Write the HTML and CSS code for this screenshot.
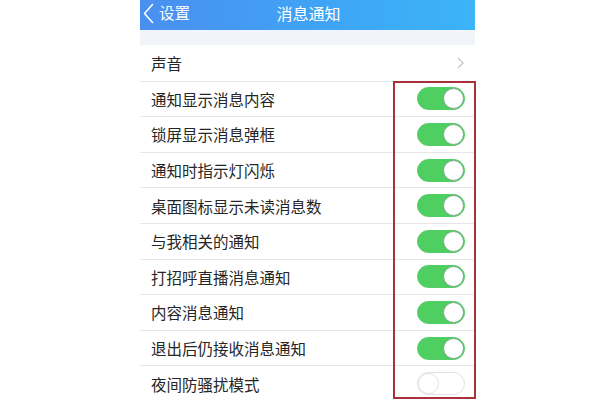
FILE: index.html
```html
<!DOCTYPE html>
<html lang="zh">
<head>
<meta charset="utf-8">
<link rel="stylesheet" href="styles.css">
</head>
<body>
<div class="page">
  <div class="phone">
    <header class="nav">
      <div class="back">
        <svg class="back-icon" width="11" height="21" viewBox="0 0 11 21"><path d="M9.5 1.5 L1.5 10.5 L9.5 19.5" fill="none" stroke="#fff" stroke-width="1.6" stroke-linecap="round" stroke-linejoin="round"/></svg>
        <span>设置</span>
      </div>
      <div class="title">消息通知</div>
    </header>
    <div class="gap"></div>
    <ul class="list">
      <li class="row"><span>声音</span><svg class="chev" width="7" height="12" viewBox="0 0 7 12"><path d="M1 1 L6 6 L1 11" fill="none" stroke="#c4c4c8" stroke-width="1.3"/></svg></li>
      <li class="row"><span>通知显示消息内容</span><i class="sw on"></i></li>
      <li class="row"><span>锁屏显示消息弹框</span><i class="sw on"></i></li>
      <li class="row"><span>通知时指示灯闪烁</span><i class="sw on"></i></li>
      <li class="row"><span>桌面图标显示未读消息数</span><i class="sw on"></i></li>
      <li class="row"><span>与我相关的通知</span><i class="sw on"></i></li>
      <li class="row"><span>打招呼直播消息通知</span><i class="sw on"></i></li>
      <li class="row"><span>内容消息通知</span><i class="sw on"></i></li>
      <li class="row"><span>退出后仍接收消息通知</span><i class="sw on"></i></li>
      <li class="row"><span>夜间防骚扰模式</span><i class="sw"></i></li>
    </ul>
    <div class="mark"></div>
  </div>
</div>
</body>
</html>
```
FILE: styles.css
```css
html, body {
  margin: 0;
  padding: 0;
  background: #fff;
}
body {
  font-family: "Noto Sans CJK SC", "Noto Sans", sans-serif;
  width: 600px;
  height: 400px;
  overflow: hidden;
}
.page {
  padding-left: 140px;
}
.phone {
  position: relative;
  width: 335px;
}
.nav {
  height: 30px;
  background: linear-gradient(90deg, #4a8ff0 0%, #3ea6f6 60%, #3bb4f8 100%);
  position: relative;
  display: flex;
  align-items: center;
  color: #fff;
}
.back {
  display: flex;
  align-items: center;
  gap: 5px;
  padding-left: 3px;
  font-size: 15.5px;
  line-height: 1;
  margin-top: -4px;
}
.title {
  position: absolute;
  left: 0;
  right: 0;
  top: 0;
  height: 26px;
  display: flex;
  align-items: center;
  justify-content: center;
  font-size: 16px;
  padding-left: 2px;
}
.gap {
  height: 15px;
  background: #f1f4f8;
}
.list {
  list-style: none;
  margin: 0;
  padding: 0;
}
.row {
  box-sizing: border-box;
  height: 35.6px;
  border-top: 1px solid #e6e6e8;
  display: flex;
  align-items: center;
  justify-content: space-between;
  padding: 0 10px 0 11px;
  font-size: 15.5px;
  color: #262626;
}
.row:first-child {
  border-top: none;
}
.chev {
  margin-right: 1px;
}
.sw {
  position: relative;
  display: block;
  width: 48px;
  height: 23px;
  border-radius: 12px;
  box-sizing: border-box;
  border: 1px solid #e0e0e2;
  background: #fff;
}
.sw::after {
  content: "";
  position: absolute;
  left: 0;
  top: 0;
  width: 21px;
  height: 21px;
  box-sizing: border-box;
  border-radius: 50%;
  background: #fff;
  border: 1px solid #e2e2e4;
}
.sw.on {
  background: #4fce62;
  border-color: #4fce62;
}
.sw.on::after {
  left: auto;
  right: 0;
  border: 1.5px solid #7fa88a;
}
.mark {
  position: absolute;
  left: 253px;
  top: 81px;
  width: 83px;
  height: 318px;
  box-sizing: border-box;
  border: 2px solid #a8323a;
}
```
